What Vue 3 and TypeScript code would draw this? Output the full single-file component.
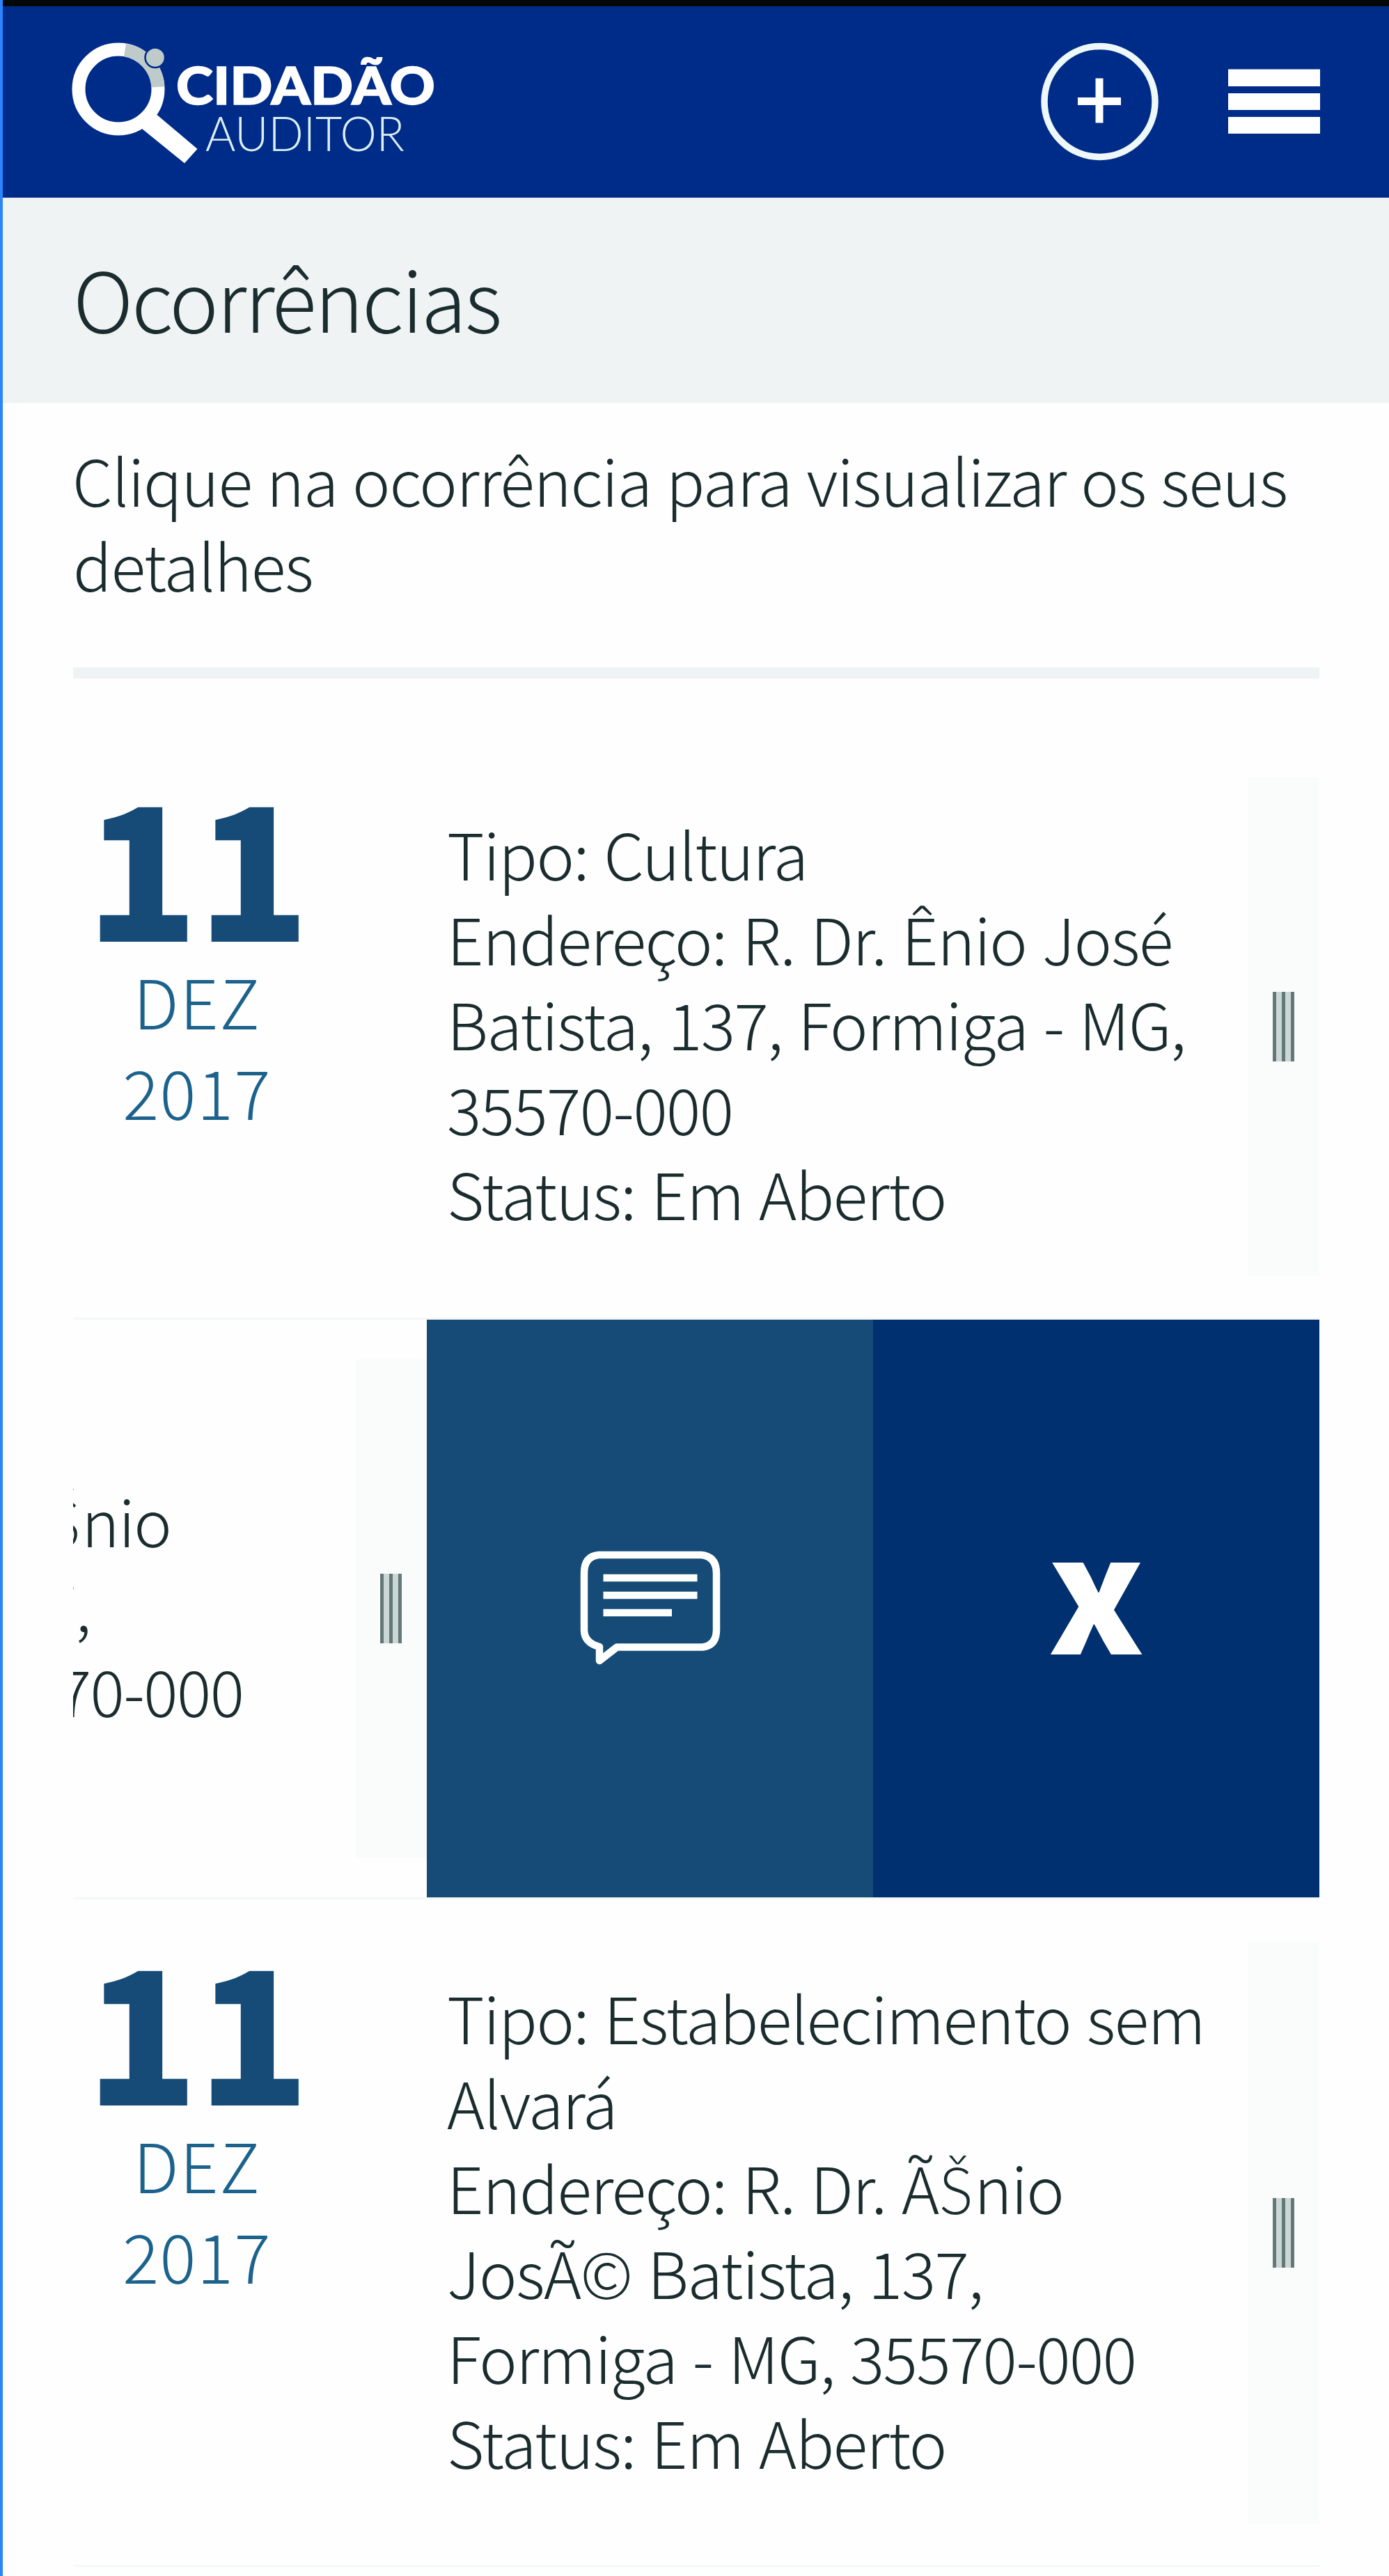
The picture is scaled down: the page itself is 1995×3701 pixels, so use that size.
<script setup lang="ts">
interface Occurrence {
  id: number
  day: string
  month: string
  year: string
  lines: string[]
  open: boolean
}

const occurrences: Occurrence[] = [
  {
    id: 1,
    day: '11',
    month: 'DEZ',
    year: '2017',
    lines: ['Tipo: Cultura', 'Endereço: R. Dr. Ênio José', 'Batista, 137, Formiga - MG,', '35570-000', 'Status: Em Aberto'],
    open: false,
  },
  {
    id: 2,
    day: '11',
    month: 'DEZ',
    year: '2017',
    lines: ['Tipo: Cultura', 'Endereço: R. Dr. ÃŠnio', 'JosÃ© Batista, 137,', 'Formiga - MG, 35570-000', 'Status: Em Aberto'],
    open: true,
  },
  {
    id: 3,
    day: '11',
    month: 'DEZ',
    year: '2017',
    lines: ['Tipo: Estabelecimento sem', 'Alvará', 'Endereço: R. Dr. ÃŠnio', 'JosÃ© Batista, 137,', 'Formiga - MG, 35570-000', 'Status: Em Aberto'],
    open: false,
  },
]

const parts = (line: string): string[] => line.split(/(Š)/)
</script>

<template>
  <div class="screen">
    <header class="topbar">
      <svg class="logo" width="540" height="190" viewBox="95 55 540 190" role="img" aria-label="Cidadão Auditor">
        <circle cx="170" cy="128" r="57" fill="none" stroke="#fff" stroke-width="19" />
        <path d="M179.5 71.8A57 57 0 0 1 226.9 125" fill="none" stroke="#bfcbcb" stroke-width="19" />
        <path d="M225.5 165L283.5 214L265 234.5L204 185Z" fill="#fff" />
        <circle cx="222.8" cy="82.7" r="15.5" fill="#002c89" />
        <circle cx="222.8" cy="82.7" r="13" fill="#bfcbcb" />
        <text class="logo-strong" x="253" y="150" textLength="372" lengthAdjust="spacingAndGlyphs">CIDADÃO</text>
        <text class="logo-light" x="295" y="216.5" textLength="286" lengthAdjust="spacingAndGlyphs">AUDITOR</text>
      </svg>
      <div class="tools">
        <svg width="170" height="172" viewBox="0 0 170 172">
          <circle cx="84.5" cy="86" r="79.5" fill="none" stroke="#eef8f9" stroke-width="9.5" />
          <path d="M53 85.5H115M84 52.500V116.500" fill="none" stroke="#fff" stroke-width="11" />
        </svg>
        <svg width="132" height="94" viewBox="0 0 132 94">
          <path d="M0 0.500H132V25H0ZM0 35H132V59H0ZM0 69H132V93H0Z" fill="#fff" />
        </svg>
      </div>
    </header>

    <h1 class="title">Ocorrências</h1>

    <main class="content">
      <p class="hint">Clique na ocorrência para visualizar os seus<br />detalhes</p>

      <ul class="list">
        <li v-for="item in occurrences" :key="item.id" class="row" :class="{ open: item.open }">
          <div class="card">
            <div class="date">
              <strong>{{ item.day }}</strong>
              <span>{{ item.month }}</span>
              <span>{{ item.year }}</span>
            </div>
            <div class="info">
              <div v-for="line in item.lines" :key="line" class="line">
                <span v-for="(part, i) in parts(line)" :key="i" :class="{ alt: part === 'Š' }">{{ part }}</span>
              </div>
            </div>
            <div class="grip"><span class="bars"><i></i><i></i><i></i></span></div>
          </div>
          <div v-if="item.open" class="actions">
            <button class="comment" aria-label="Comentar">
              <svg width="202" height="168" viewBox="832 2228 202 168">
                <path
                  d="M859 2234H1006Q1028 2236 1028 2260V2342Q1028 2364 1008 2366.500H885L860 2386V2366Q838 2360 838 2342V2260Q838 2236 859 2234Z"
                  fill="none" stroke="#fff" stroke-width="10.500" stroke-linejoin="round"
                />
                <path d="M865.500 2267H1000.500M865.500 2292H1000.500M865.500 2317H964" stroke="#fff" stroke-width="10.500" />
              </svg>
            </button>
            <button class="close">x</button>
          </div>
        </li>
      </ul>
    </main>
  </div>
</template>

<style>
body {
  margin: 0;
  background: #fefefe;
}
</style>

<style scoped>
.screen {
  box-sizing: border-box;
  width: 1995px;
  height: 3701px;
  overflow: hidden;
  border-left: 4px solid #2a85ff;
  background: #fefefe;
  color: #1a2c2e;
  font-family: "Noto Sans CJK SC", "Open Sans", sans-serif;
  font-weight: 300;
}
.topbar {
  box-sizing: border-box;
  display: flex;
  justify-content: space-between;
  align-items: flex-start;
  height: 284px;
  padding: 46px 99px 0 91px;
  border-top: 9px solid #050808;
  background: #002c89;
}
.logo {
  display: block;
}
.logo-strong {
  font: 900 75px Lato, sans-serif;
  fill: #fff;
  stroke: #fff;
  stroke-width: 1.5px;
}
.logo-light {
  font: 300 69px Lato, sans-serif;
  fill: #dceff2;
}
.tools {
  display: flex;
  align-items: center;
  gap: 99px;
  margin-top: 5px;
}
.title {
  box-sizing: border-box;
  height: 295px;
  margin: 0;
  padding-left: 101px;
  background: #eff3f3;
  font-size: 119px;
  font-weight: 300;
  letter-spacing: -2.5px;
  line-height: 284px;
}
.content {
  padding: 48px 100px 0 101px;
}
.hint {
  margin: 0;
  padding-bottom: 88px;
  border-bottom: 16px solid #eff3f3;
  font-size: 92px;
  letter-spacing: -1.250px;
  word-spacing: 2px;
  line-height: 122px;
  text-indent: -1px;
  white-space: nowrap;
}
.list {
  margin: 0;
  padding: 82px 0 0;
  list-style: none;
}
.row {
  display: flex;
  overflow: hidden;
  border-bottom: 3px solid #f4f8f8;
}
.card {
  box-sizing: border-box;
  display: flex;
  flex: none;
  width: 1790px;
  padding: 60px 0 58px;
}
.row:first-child .card {
  padding-bottom: 60px;
}
.row.open .card {
  margin-left: -1282px;
  padding: 57px 0 57px;
}
.date {
  display: flex;
  flex-direction: column;
  align-items: center;
  width: 356px;
  color: #1c628c;
  font-size: 97px;
  letter-spacing: 1.500px;
  line-height: 129.500px;
}
.date strong {
  height: 255px;
  color: #154b76;
  font-size: 266px;
  font-weight: 900;
  letter-spacing: -2px;
  line-height: 241px;
}
.info {
  flex: 1;
  padding: 47px 0 59px 181px;
  font-size: 92px;
  letter-spacing: -1.550px;
  word-spacing: 3.500px;
  line-height: 122px;
  white-space: nowrap;
}
.line {
  height: 122px;
}
.alt {
  margin: 0 3px 0 1px;
  font-family: Lato, sans-serif;
  line-height: 1;
}
.grip {
  box-sizing: border-box;
  display: flex;
  align-items: center;
  justify-content: center;
  flex: none;
  width: 102px;
  padding-right: 2px;
  background: #fafcfc;
}
.bars {
  display: flex;
  gap: 8px;
  background: #cbd6d6;
}
.bars i {
  width: 5px;
  height: 100px;
  background: #647878;
}
.actions {
  display: flex;
  flex: none;
  width: 1282px;
}
.actions button {
  display: flex;
  align-items: center;
  justify-content: center;
  flex: 1;
  padding: 0;
  border: 0;
  color: #fff;
  font: 900 232px "Noto Sans CJK SC", sans-serif;
  line-height: 1;
}
.actions .comment {
  padding-top: 2px;
  background: #154b76;
}
.actions .close {
  padding-bottom: 70px;
  background: #003070;
}
</style>
